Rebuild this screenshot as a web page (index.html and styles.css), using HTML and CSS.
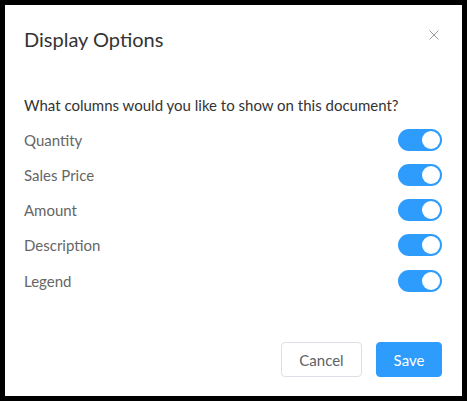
FILE: index.html
```html
<!DOCTYPE html>
<html>
<head>
<meta charset="utf-8">
<link rel="stylesheet" href="styles.css">
</head>
<body>
<div class="dialog">
  <div class="header">
    <h1 class="title">Display Options</h1>
    <button class="close" aria-label="Close">
      <svg width="10" height="10" viewBox="0 0 10 10"><path d="M0.5 0.5L9.5 9.5M9.5 0.5L0.5 9.5" stroke="#9a9a9a" stroke-width="1" fill="none"/></svg>
    </button>
  </div>
  <div class="body">
    <p class="question">What columns would you like to show on this document?</p>
    <div class="row"><span class="label">Quantity</span><span class="toggle"><span class="knob"></span></span></div>
    <div class="row"><span class="label">Sales Price</span><span class="toggle"><span class="knob"></span></span></div>
    <div class="row"><span class="label">Amount</span><span class="toggle"><span class="knob"></span></span></div>
    <div class="row"><span class="label">Description</span><span class="toggle"><span class="knob"></span></span></div>
    <div class="row"><span class="label">Legend</span><span class="toggle"><span class="knob"></span></span></div>
  </div>
  <div class="footer">
    <button class="btn cancel">Cancel</button>
    <button class="btn save">Save</button>
  </div>
</div>
</body>
</html>
```

FILE: styles.css
```css
html, body {
  margin: 0;
  padding: 0;
  background: #000;
}
body {
  padding: 5px;
  font-family: Lato, "Open Sans", sans-serif;
}
.dialog {
  width: 457px;
  height: 391px;
  background: #fff;
  box-sizing: border-box;
  padding: 21px 20px 19px 19px;
  display: flex;
  flex-direction: column;
}
.header {
  display: flex;
  justify-content: space-between;
  align-items: center;
  height: 26px;
}
.title {
  margin: 0;
  font-size: 20px;
  font-weight: 400;
  color: #333;
  line-height: 26px;
}
.close {
  border: 0;
  background: none;
  padding: 0;
  width: 10px;
  height: 10px;
  margin-right: 3px;
  margin-top: -8px;
  display: flex;
}
.body {
  margin-top: 43px;
}
.question {
  margin: 0 0 7px 0;
  font-size: 15px;
  line-height: 20px;
  color: #333;
}
.row {
  display: flex;
  justify-content: space-between;
  align-items: center;
  height: 35.25px;
}
.label {
  font-size: 15px;
  color: #666;
}
.toggle {
  width: 44px;
  height: 22px;
  border-radius: 11px;
  background: #2d9cfc;
  display: flex;
  align-items: center;
  justify-content: flex-end;
  padding: 0 2px;
  box-sizing: border-box;
}
.knob {
  width: 18px;
  height: 18px;
  border-radius: 50%;
  background: #fff;
}
.footer {
  margin-top: auto;
  display: flex;
  justify-content: flex-end;
  gap: 14px;
}
.btn {
  font-family: Lato, "Open Sans", sans-serif;
  font-size: 15px;
  height: 35px;
  border-radius: 4px;
  padding: 0 16px;
  cursor: pointer;
}
.cancel {
  background: #fff;
  border: 1px solid #dcdfe6;
  color: #606266;
  width: 81px;
}
.save {
  background: #2d9cfc;
  border: 1px solid #2d9cfc;
  color: #fff;
  width: 66px;
}
```
